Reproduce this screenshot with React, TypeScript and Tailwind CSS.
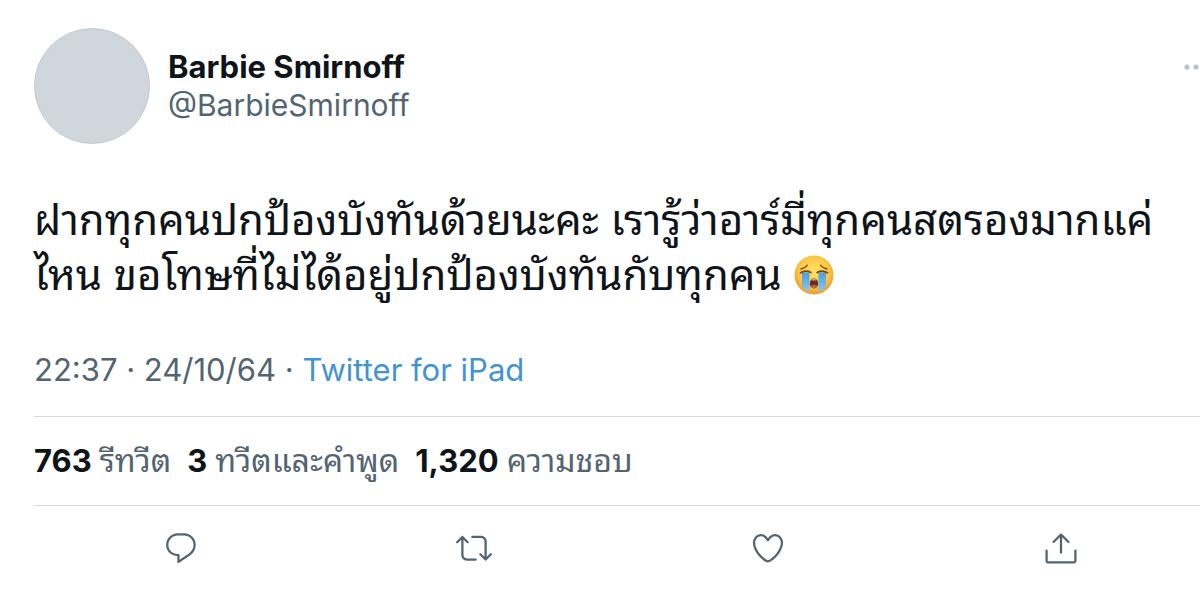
import type { ReactNode } from "react";

const stats = [
  { count: "763", label: "รีทวีต" },
  { count: "3", label: "ทวีตและคำพูด" },
  { count: "1,320", label: "ความชอบ" },
];

function Icon({ children }: { children: ReactNode }) {
  return (
    <svg viewBox="0 0 24 24" className="size-9 fill-current" aria-hidden="true">
      {children}
    </svg>
  );
}

const actions = [
  {
    name: "Reply",
    icon: (
      <path d="M14.046 2.242l-4.148-.01h-.002c-4.374 0-7.8 3.427-7.8 7.802 0 4.098 3.186 7.206 7.465 7.37v3.828c0 .108.044.286.12.403.142.225.384.347.632.347.138 0 .277-.038.402-.118.264-.168 6.473-4.14 8.088-5.506 1.902-1.61 3.04-3.97 3.043-6.312v-.017c-.006-4.367-3.43-7.787-7.8-7.788zm3.787 12.972c-1.134.96-4.862 3.405-6.772 4.643V16.67c0-.414-.335-.75-.75-.75h-.396c-3.66 0-6.318-2.476-6.318-5.886 0-3.534 2.768-6.302 6.3-6.302l4.147.01h.002c3.532 0 6.3 2.766 6.302 6.296-.003 1.91-.942 3.844-2.514 5.176z" />
    ),
  },
  {
    name: "Retweet",
    icon: (
      <path d="M23.77 15.67c-.292-.293-.767-.293-1.06 0l-2.22 2.22V7.65c0-2.068-1.683-3.75-3.75-3.75h-5.85c-.414 0-.75.336-.75.75s.336.75.75.75h5.85c1.24 0 2.25 1.01 2.25 2.25v10.24l-2.22-2.22c-.293-.293-.768-.293-1.06 0s-.294.768 0 1.06l3.5 3.5c.145.147.337.22.53.22s.383-.072.53-.22l3.5-3.5c.294-.292.294-.767 0-1.06zm-10.66 3.28H7.26c-1.24 0-2.25-1.01-2.25-2.25V6.46l2.22 2.22c.148.147.34.22.532.22s.384-.073.53-.22c.293-.293.293-.768 0-1.06l-3.5-3.5c-.293-.294-.768-.294-1.06 0l-3.5 3.5c-.294.292-.294.767 0 1.06s.767.293 1.06 0l2.22-2.22V16.7c0 2.068 1.683 3.75 3.75 3.75h5.85c.414 0 .75-.336.75-.75s-.337-.75-.75-.75z" />
    ),
  },
  {
    name: "Like",
    icon: (
      <path d="M12 21.638h-.014C9.403 21.59 1.95 14.856 1.95 8.478c0-3.064 2.525-5.754 5.403-5.754 2.29 0 3.83 1.58 4.646 2.73.814-1.148 2.354-2.73 4.645-2.73 2.88 0 5.404 2.69 5.404 5.755 0 6.376-7.454 13.11-10.037 13.157H12zM7.354 4.225c-2.08 0-3.903 1.988-3.903 4.255 0 5.74 7.034 11.596 8.55 11.658 1.518-.062 8.55-5.917 8.55-11.658 0-2.267-1.823-4.255-3.903-4.255-2.528 0-3.94 2.936-3.952 2.965-.23.562-1.156.562-1.387 0-.014-.03-1.425-2.965-3.954-2.965z" />
    ),
  },
  {
    name: "Share",
    icon: (
      <>
        <path d="M17.53 7.47l-5-5c-.293-.293-.768-.293-1.06 0l-5 5c-.294.293-.294.768 0 1.06s.767.294 1.06 0l3.72-3.72V15c0 .414.336.75.75.75s.75-.336.75-.75V4.81l3.72 3.72c.146.147.338.22.53.22s.384-.072.53-.22c.293-.293.293-.767 0-1.06z" />
        <path d="M2.400 13.700v7c0 .5.300.8.800.8h17.600c.5 0 .8-.3.800-.8v-7" fill="none" stroke="currentColor" strokeWidth="1.500" strokeLinecap="round" />
      </>
    ),
  },
];

function CryingFace() {
  return (
    <svg viewBox="0 0 40 40" className="inline-block size-10 align-[-5px]" role="img" aria-label="Loudly crying face">
      <defs>
        <radialGradient id="face" cx="50%" cy="42%" r="58%">
          <stop offset="0" stopColor="#ffe268" />
          <stop offset="0.65" stopColor="#fcc944" />
          <stop offset="1" stopColor="#e99a2c" />
        </radialGradient>
        <linearGradient id="tears" x1="0" y1="0" x2="0" y2="1">
          <stop offset="0" stopColor="#4c9be0" />
          <stop offset="1" stopColor="#8cc5f2" />
        </linearGradient>
      </defs>
      <circle cx="20" cy="20" r="19.5" fill="url(#face)" />
      <path d="M8 17.500h7.500v19c-3.500-1-7.500-3.500-7.500-6zM24.500 17.500h7.500v13c0 2.500-4 5-7.500 6z" fill="url(#tears)" />
      <g fill="none" stroke="#764716" strokeLinecap="round">
        <path d="M7 14c2.600-.5 5-1.800 6.500-3.800M33 14c-2.600-.5-5-1.800-6.500-3.800" strokeWidth="1.300" />
        <path d="M6.500 17.800c3-2 7.200-2 10.500-.4M33.500 17.800c-3-2-7.200-2-10.500-.4" strokeWidth="1.700" />
      </g>
      <ellipse cx="20" cy="28.500" rx="4.200" ry="5" fill="#6b3514" />
      <path d="M17 31.200c1.600-1.500 4.400-1.500 6 0-.8 1.300-1.800 2-3 2s-2.200-.7-3-2z" fill="#c9685a" />
      <path d="M17.500 25.200c1.500-1.300 3.500-1.300 5 0z" fill="#fff" />
    </svg>
  );
}

export default function App() {
  return (
    <main className="min-h-screen overflow-hidden bg-white pt-7 pl-[34px] font-[Inter,'Noto_Sans_Thai_Looped',Loma,'Noto_Sans',sans-serif] text-[#0f1419]">
      <article className="-mr-2">
        <header className="flex items-start">
          <a href="#profile" aria-label="Barbie Smirnoff" className="size-[116px] shrink-0 rounded-full border border-[#c3ccd2] bg-[#cfd6dc]" />
          <div className="ml-[18px] flex flex-col pt-[19px] leading-[39px]">
            <a href="#profile" className="text-[31px] font-bold">Barbie Smirnoff</a>
            <a href="#profile" className="text-[30px] text-[#536471]">@BarbieSmirnoff</a>
          </div>
          <button type="button" aria-label="More" className="mt-[33px] ml-auto text-[#b9c3cb]">
            <svg viewBox="0 0 28 12" className="h-3 w-7 fill-current" aria-hidden="true">
              <circle cx="7" cy="6" r="2.600" />
              <circle cx="16" cy="6" r="2.600" />
              <circle cx="25" cy="6" r="2.600" />
            </svg>
          </button>
        </header>

        <p lang="th" className="mt-12 text-[42px] leading-[55px]">
          ฝากทุกคนปกป้องบังทันด้วยนะคะ เรารู้ว่าอาร์มี่ทุกคนสตรองมากแค่
          <br />
          ไหน ขอโทษที่ไม่ได้อยู่ปกป้องบังทันกับทุกคน <CryingFace />
        </p>

        <div className="mt-12 border-b border-[#d5dade] pb-[26px] text-[31px] leading-10 text-[#536471]">
          <time>22:37 · 24/10/64</time> ·{" "}
          <a href="#source" className="text-[#4393d0]">Twitter for iPad</a>
        </div>

        <div className="flex gap-4 border-b border-[#d5dade] py-6">
          {stats.map((stat) => (
            <a key={stat.label} href="#stats" className="flex items-baseline gap-2 text-[#536471]">
              <strong className="text-[31px] leading-10 font-bold text-[#0f1419]">{stat.count}</strong>
              <span lang="th" className="text-[32px] leading-9">{stat.label}</span>
            </a>
          ))}
        </div>

        <div className="grid grid-cols-4 pt-6 text-[#536471]">
          {actions.map((action) => (
            <button key={action.name} type="button" aria-label={action.name} className="flex justify-center">
              <Icon>{action.icon}</Icon>
            </button>
          ))}
        </div>
      </article>
    </main>
  );
}
